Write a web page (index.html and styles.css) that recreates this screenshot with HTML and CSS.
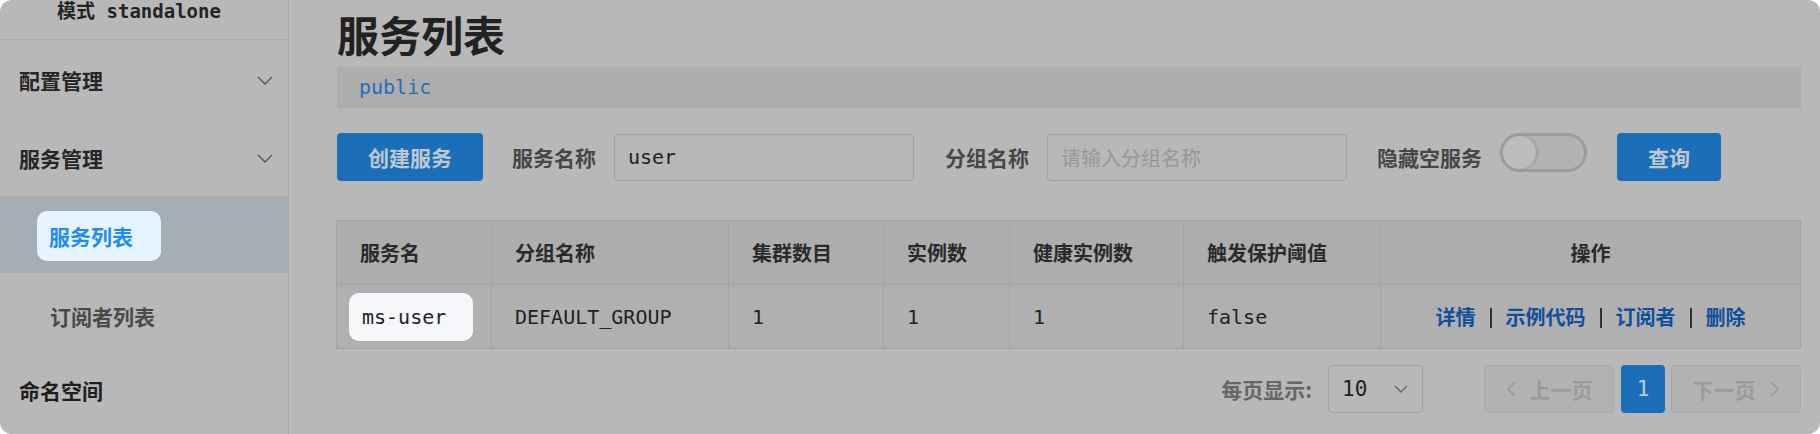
FILE: index.html
```html
<!DOCTYPE html>
<html lang="zh-CN">
<head>
<meta charset="utf-8">
<title>服务列表</title>
<link rel="stylesheet" href="styles.css">
</head>
<body>
<div class="app">
  <aside class="sidebar">
    <div class="side-head">模式 standalone</div>
    <div class="menu-item item-config">
      <span>配置管理</span>
      <svg class="chev" width="16" height="9" viewBox="0 0 16 9"><polyline points="1,1 8,8 15,1" fill="none" stroke="#555" stroke-width="1.4"/></svg>
    </div>
    <div class="menu-item item-service">
      <span>服务管理</span>
      <svg class="chev" width="16" height="9" viewBox="0 0 16 9"><polyline points="1,1 8,8 15,1" fill="none" stroke="#555" stroke-width="1.4"/></svg>
    </div>
    <div class="sub-item selected"><span class="sel-box">服务列表</span></div>
    <div class="sub-item sub-plain">订阅者列表</div>
    <div class="menu-item item-ns"><span>命名空间</span></div>
  </aside>
  <main class="main">
    <h1 class="title">服务列表</h1>
    <div class="ns-bar">public</div>
    <div class="toolbar">
      <button class="btn-primary btn-create">创建服务</button>
      <label class="label lbl-1">服务名称</label>
      <div class="input">user</div>
      <label class="label lbl-2">分组名称</label>
      <div class="input placeholder">请输入分组名称</div>
      <label class="label lbl-3">隐藏空服务</label>
      <div class="switch"><div class="knob"></div></div>
      <button class="btn-primary btn-query">查询</button>
    </div>
    <table class="grid">
      <colgroup>
        <col style="width:155px"><col style="width:237px"><col style="width:155px"><col style="width:126px"><col style="width:174px"><col style="width:197px"><col style="width:420px">
      </colgroup>
      <thead>
        <tr><th>服务名</th><th>分组名称</th><th>集群数目</th><th>实例数</th><th>健康实例数</th><th>触发保护阈值</th><th class="center">操作</th></tr>
      </thead>
      <tbody>
        <tr>
          <td class="cell-name"><span class="name-box">ms-user</span></td>
          <td>DEFAULT_GROUP</td>
          <td>1</td>
          <td>1</td>
          <td>1</td>
          <td>false</td>
          <td class="center actions"><a>详情</a><i class="sep"></i><a>示例代码</a><i class="sep"></i><a>订阅者</a><i class="sep"></i><a>删除</a></td>
        </tr>
      </tbody>
    </table>
    <div class="pager">
      <span class="pager-label">每页显示:</span>
      <div class="select"><span>10</span><svg width="14" height="8" viewBox="0 0 14 8"><polyline points="1,1 7,7 13,1" fill="none" stroke="#666" stroke-width="1.4"/></svg></div>
      <div class="page-btn wide disabled"><svg width="10" height="16" viewBox="0 0 10 16"><polyline points="9,1 2,8 9,15" fill="none" stroke="#999" stroke-width="1.5"/></svg><span>上一页</span></div>
      <div class="page-btn current">1</div>
      <div class="page-btn wide disabled"><span>下一页</span><svg width="10" height="16" viewBox="0 0 10 16"><polyline points="1,1 8,8 1,15" fill="none" stroke="#999" stroke-width="1.5"/></svg></div>
    </div>
  </main>
</div>
</body>
</html>
```
FILE: styles.css
```css
* { box-sizing: border-box; }
html, body { margin: 0; padding: 0; background: #ffffff; }
body {
  font-family: "DejaVu Sans Mono", "Noto Sans CJK SC", monospace;
  color: #222;
  width: 1820px;
  height: 434px;
  overflow: hidden;
}
.app {
  display: flex;
  width: 1820px;
  height: 434px;
  background: #b8b8b8;
  border-radius: 12px;
  overflow: hidden;
}
.sidebar {
  width: 289px;
  flex: none;
  border-right: 1px solid #a9a9a9;
  display: flex;
  flex-direction: column;
}
.side-head {
  height: 40px;
  border-bottom: 1px solid #a9a9a9;
  font-size: 19px;
  font-weight: bold;
  color: #242424;
  text-align: center;
  padding-right: 10px;
  line-height: 22px;
}
.menu-item {
  display: flex;
  align-items: center;
  justify-content: space-between;
  padding: 0 15px 0 19px;
  font-family: "Noto Sans CJK SC", sans-serif;
  font-size: 21px;
  font-weight: 700;
  color: #262626;
}
.item-config { height: 80px; }
.item-service { height: 76px; }
.item-ns { height: 62px; color: #1f1f1f; }
.sub-item {
  display: flex;
  align-items: center;
  font-family: "Noto Sans CJK SC", sans-serif;
  font-size: 21px;
  font-weight: 700;
}
.selected {
  height: 77px;
  background: #a5aeb5;
  padding-left: 37px;
  padding-top: 3px;
}
.sel-box {
  display: flex;
  align-items: center;
  width: 124px;
  height: 50px;
  padding-left: 12px;
  background: #e6f4ff;
  border-radius: 10px;
  color: #1f8cf0;
}
.sub-plain {
  height: 86px;
  padding-left: 50px;
  color: #4a4a4a;
}
.main {
  flex: 1;
  padding: 12px 19px 0 48px;
  display: flex;
  flex-direction: column;
}
.title {
  margin: 0;
  height: 44px;
  line-height: 44px;
  font-family: "Noto Sans CJK SC", sans-serif;
  font-size: 42px;
  font-weight: 700;
  color: #222;
}
.ns-bar {
  margin-top: 11px;
  height: 41px;
  line-height: 41px;
  background: #adadad;
  padding-left: 22px;
  font-size: 20px;
  color: #1f6fba;
}
.toolbar {
  margin-top: 25px;
  height: 48px;
  display: flex;
  align-items: center;
}
.btn-primary {
  border: none;
  background: #1a6fb8;
  color: #bdc8d3;
  font-family: "Noto Sans CJK SC", sans-serif;
  font-size: 21px;
  font-weight: 700;
  border-radius: 4px;
  height: 48px;
  padding: 0;
}
.btn-create { width: 146px; }
.btn-query { width: 104px; margin-left: 30px; }
.label {
  font-family: "Noto Sans CJK SC", sans-serif;
  font-size: 21px;
  font-weight: 700;
  color: #474747;
  margin-right: 18px;
}
.lbl-1 { margin-left: 29px; }
.lbl-2 { margin-left: 31px; }
.lbl-3 { margin-left: 30px; }
.input {
  width: 300px;
  height: 47px;
  border: 1px solid #a1a1a1;
  border-radius: 4px;
  padding-left: 13px;
  display: flex;
  align-items: center;
  font-size: 20px;
  color: #222;
}
.placeholder {
  font-family: "Noto Sans CJK SC", sans-serif;
  color: #979797;
  font-size: 20px;
}
.switch {
  width: 87px;
  height: 39px;
  border: 3px solid #9b9ba0;
  border-radius: 20px;
  background: #b3b3b5;
  margin-top: -9px;
  display: flex;
  align-items: center;
}
.knob {
  width: 33px;
  height: 33px;
  border-radius: 50%;
  background: #bdbdbf;
  box-shadow: 2px 0 3px rgba(0,0,0,0.12);
}
.grid {
  margin-top: 39px;
  border-collapse: collapse;
  table-layout: fixed;
  width: 1464px;
  margin-left: -1px;
}
.grid th, .grid td {
  border: 1px solid #a3a3a3;
  height: 64px;
  padding: 0 0 0 23px;
  text-align: left;
  font-size: 20px;
  white-space: nowrap;
}
.grid th {
  background: #adadad;
  font-family: "Noto Sans CJK SC", sans-serif;
  font-weight: 700;
  color: #2a2a2a;
}
.grid td {
  background: #b0b0b0;
  color: #222;
}
.grid .center { text-align: center; padding-left: 0; }
.cell-name { padding-left: 12px !important; }
.name-box {
  display: inline-flex;
  align-items: center;
  width: 124px;
  height: 48px;
  padding-left: 13px;
  background: #f5f7fa;
  border-radius: 10px;
  color: #222;
}
.actions a {
  font-family: "Noto Sans CJK SC", sans-serif;
  font-weight: 700;
  font-size: 20px;
  color: #0f4f9b;
}
.actions .sep {
  display: inline-block;
  width: 2px;
  height: 20px;
  background: #3a3020;
  margin: 0 14px;
  vertical-align: -3px;
}
.pager {
  margin-top: 16px;
  height: 48px;
  display: flex;
  align-items: center;
  justify-content: flex-end;
}
.pager-label {
  font-family: "Noto Sans CJK SC", sans-serif;
  font-size: 21px;
  font-weight: 700;
  color: #666;
  margin-right: 16px;
}
.select {
  width: 95px;
  height: 48px;
  border: 1px solid #a1a1a1;
  border-radius: 4px;
  display: flex;
  align-items: center;
  justify-content: space-between;
  padding: 0 14px 0 13px;
  font-size: 21px;
  color: #222;
  margin-right: 61px;
}
.page-btn {
  height: 48px;
  border-radius: 4px;
  display: flex;
  align-items: center;
  justify-content: center;
  font-family: "Noto Sans CJK SC", sans-serif;
  font-size: 21px;
  font-weight: 700;
}
.page-btn.wide { width: 130px; gap: 14px; }
.disabled {
  border: 1px solid #a9a9a9;
  background: #b2b2b2;
  color: #9a9a9a;
}
.current {
  width: 44px;
  margin: 0 6px 0 7px;
  background: #1a6fb8;
  color: #c2cad3;
  font-family: "DejaVu Sans Mono", monospace;
  font-weight: 400;
}
```
